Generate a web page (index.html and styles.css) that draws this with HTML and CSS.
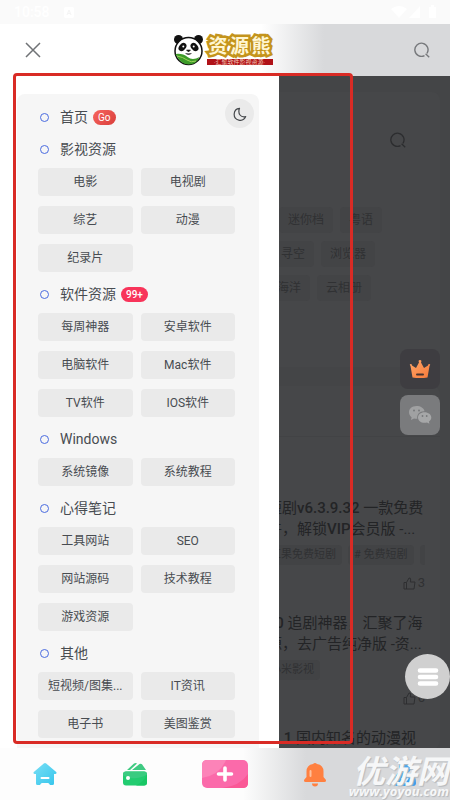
FILE: index.html
```html
<!DOCTYPE html>
<html lang="zh-CN">
<head>
<meta charset="utf-8">
<meta name="viewport" content="width=device-width, initial-scale=1">
<title>资源熊</title>
<link rel="stylesheet" href="styles.css">
</head>
<body>
<div class="status">
  <span class="status-left">10:58
    <svg width="10" height="11" viewBox="0 0 10 11"><rect width="10" height="11" rx="2" fill="#fff"/><path d="M3 8l2-5 2 5M4 6.5h2" stroke="#f4f4f4" fill="none"/></svg>
  </span>
  <svg width="46" height="14" viewBox="0 0 46 14" fill="#fff"><path d="M0 4Q8-2 16 4L8 13zM29 1v12H18zM38 2h2V0h3v2h2v11h-7z"/></svg>
</div>

<header class="header">
  <button class="icon-btn" aria-label="关闭"><svg width="16" height="16" viewBox="0 0 16 16" fill="none" stroke="#707376" stroke-width="1.5"><path d="M1 1l14 14M15 1L1 15"/></svg></button>
  <a class="logo" href="#">
    <svg width="31" height="32" viewBox="0 0 31 32">
      <circle cx="5.500" cy="5.500" r="4.500" fill="#111"/><circle cx="25.500" cy="5.500" r="4.500" fill="#111"/>
      <circle cx="15.500" cy="17" r="13.500" fill="#fff" stroke="#111" stroke-width="1.500"/>
      <path d="M2.500 20q7-1 12 3t12 0q-3 7.500-11 7.500T2.500 20z" fill="#3c9b28"/>
      <path d="M4 22q6 1 10 4t9 1" stroke="#9bd35a" fill="none"/>
      <ellipse cx="9.500" cy="13" rx="3.300" ry="4.600" transform="rotate(40 9.500 13)" fill="#111"/>
      <ellipse cx="21.500" cy="13" rx="3.300" ry="4.600" transform="rotate(-40 21.500 13)" fill="#111"/>
      <circle cx="10.300" cy="12.500" r="1" fill="#fff"/><circle cx="20.700" cy="12.500" r="1" fill="#fff"/>
      <path d="M13.500 16h4l-2 2zM12.500 19.500q3 2 6 0" fill="#111" stroke="#111" stroke-width=".6"/>
    </svg>
    <span class="logo-text"><span class="logo-name"><b>资</b><b>源</b><b>熊</b></span><span class="logo-sub">·汇聚软件影视资源·</span></span>
  </a>
  <button class="icon-btn" aria-label="搜索"><svg width="16" height="16" viewBox="0 0 16 16" fill="none" stroke="#77797c" stroke-width="1.400"><path d="M10.500 13.600A6.600 6.600 0 1 1 13 11.300M11.600 11.800l3.600 3.400"/></svg></button>
</header>

<main class="main">
  <div class="page">
    <section class="card card-search">
      <button class="page-search" aria-label="搜索内容"><svg width="16" height="16" viewBox="0 0 16 16" fill="none" stroke="#2c2d2f" stroke-width="1.300"><path d="M10.500 13.600A6.600 6.600 0 1 1 13 11.300M11.600 11.800l3.600 3.400"/></svg></button>
      <div class="chips">
        <div class="chip-row chip-row-a"><a href="#">迷你档</a><a href="#">粤语</a></div>
        <div class="chip-row chip-row-b"><a href="#">寻空</a><a href="#">浏览器</a></div>
        <div class="chip-row"><a href="#">海洋</a><a href="#">云相册</a></div>
      </div>
    </section>
    <section class="card card-posts">
      <div class="tabs"></div>
      <article class="post">
        <h2>短剧<b>v6.3.9.32</b> 一款免费<br>件，解锁<b>VIP</b>会员版 -...</h2>
        <div class="tags"><a href="#">红果免费短剧</a><a href="#"># 免费短剧</a><a href="#"># 短剧</a></div>
        <div class="likes"><svg width="13" height="13" viewBox="0 0 13 13" fill="none" stroke="#2e2f31"><path d="M1 5.500h2.500v6.500H1zM3.500 5.500L6 1q2-.3 1.700 2L7.300 5H12l-1 7H3.500"/></svg>3</div>
      </article>
      <article class="post">
        <h2><span class="indent"><b>.0</b> 追剧神器，汇聚了海</span><br>源，去广告纯净版 -资...</h2>
        <div class="tags"><a href="#">小米影视</a></div>
        <div class="likes"><svg width="13" height="13" viewBox="0 0 13 13" fill="none" stroke="#2e2f31"><path d="M1 5.500h2.500v6.500H1zM3.500 5.500L6 1q2-.3 1.700 2L7.300 5H12l-1 7H3.500"/></svg>6</div>
      </article>
      <article class="post">
        <h2><span class="indent"><b>5.1</b> 国内知名的动漫视</span></h2>
      </article>
    </section>
  </div>

  <aside class="drawer">
    <div class="panel">
      <button class="night" aria-label="夜间模式"><svg width="14" height="14" viewBox="0 0 14 14" fill="none" stroke="#45484c" stroke-width="1.200" stroke-linejoin="round"><path d="M6.500 1.300A6 6 0 1 0 12.700 9.600Q9 10.500 7 8T6.500 1.300z"/></svg></button>
      <h3><a href="#">首页</a><span class="badge badge-go">Go</span></h3>
      <h3><a href="#">影视资源</a></h3>
      <nav class="links"><a href="#">电影</a><a href="#">电视剧</a><a href="#">综艺</a><a href="#">动漫</a><a href="#">纪录片</a></nav>
      <h3><a href="#">软件资源</a><span class="badge badge-hot">99+</span></h3>
      <nav class="links"><a href="#">每周神器</a><a href="#">安卓软件</a><a href="#">电脑软件</a><a href="#">Mac软件</a><a href="#">TV软件</a><a href="#">IOS软件</a></nav>
      <h3><a href="#">Windows</a></h3>
      <nav class="links"><a href="#">系统镜像</a><a href="#">系统教程</a></nav>
      <h3><a href="#">心得笔记</a></h3>
      <nav class="links"><a href="#">工具网站</a><a href="#">SEO</a><a href="#">网站源码</a><a href="#">技术教程</a><a href="#">游戏资源</a></nav>
      <h3><a href="#">其他</a></h3>
      <nav class="links"><a href="#">短视频/图集...</a><a href="#">IT资讯</a><a href="#">电子书</a><a href="#">美图鉴赏</a></nav>
    </div>
  </aside>

  <div class="floats">
    <button class="float float-vip" aria-label="会员"><svg width="22" height="20" viewBox="0 0 22 20"><defs><linearGradient id="cr" x1="0" y1="0" x2="1" y2="1"><stop offset="0" stop-color="#ffa668"/><stop offset="1" stop-color="#f77a3a"/></linearGradient></defs><path d="M3.500 18.500L1.500 7q-1.500-1.500 0-2t1.500 1.500l4 2.500 3-5.500q-1.200-2.500 1-2.500t1 2.500l3 5.500 4-2.500Q19 4.500 20.500 5t0 2l-2 11.500q-7.500 1-15 0z" fill="url(#cr)"/><rect x="7" y="14.500" width="8" height="2" rx="1" fill="#4a3430"/></svg></button>
    <button class="float float-wx" aria-label="微信"><svg width="24" height="20" viewBox="0 0 24 20"><path d="M8.500 1C4 1 1 3.800 1 7.300c0 2 1 3.700 2.600 4.900L3 15l3-1.500q1.500.4 3.300.3C8.500 9 12 6 16.500 6.300 16 3 12.500 1 8.500 1z" fill="#a0a1a2"/><path d="M16.500 7.200c-3.800 0-6.500 2.400-6.500 5.300s2.700 5.300 6.500 5.300q1.400 0 2.500-.4l2.400 1.400-.5-2.200c1.500-1 2.400-2.500 2.400-4.100 0-2.900-3-5.300-6.800-5.300z" fill="#a6a7a8"/><g fill="#77787a"><circle cx="6" cy="5.500" r="1"/><circle cx="11" cy="5.500" r="1"/><circle cx="14.500" cy="11" r=".9"/><circle cx="18.700" cy="11" r=".9"/></g></svg></button>
  </div>
  <button class="menu" aria-label="菜单"><svg width="22" height="20" viewBox="0 0 22 20" stroke="#fff" stroke-width="4.600" stroke-linecap="round"><path d="M3 3.500h16M3 10h16M3 16.500h16"/></svg></button>
  <div class="frame"></div>
</main>

<nav class="tabbar">
  <a href="#" aria-label="首页"><svg width="24" height="24" viewBox="0 0 24 24"><defs><linearGradient id="ho" x1="0" y1="0" x2="1" y2="1"><stop offset="0" stop-color="#79dff5"/><stop offset="1" stop-color="#35c5ec"/></linearGradient></defs><path d="M10.800 1.500q1.200-1 2.400 0l10 8.500q1 1.500-.7 2H21v9.500q0 1.500-1.500 1.500H17q-1-2-2-2H9q-1 0-2 2H4.500Q3 23 3 21.500V12H1.500q-1.700-.5-.7-2z" fill="url(#ho)"/><rect x="7.500" y="15" width="9" height="2" rx="1" fill="#fff"/></svg></a>
  <a href="#" aria-label="钱包"><svg width="26" height="24" viewBox="0 0 26 24"><path d="M5 8l7-6.500q2-1 3 0L8 8zM10 8l7.500-6q1.500-.7 2.500.3l4 5.700z" fill="#3fca82"/><rect x="1" y="9.500" width="24" height="14" rx="3" fill="#22cc70"/><path d="M14 23.500Q22 20 25 12v8.500q0 3-3 3z" fill="#19c765"/><path d="M4 9.500h18q3 0 3 3-12 7-24 1v-1q0-3 3-3z" fill="#3acb80"/><circle cx="6" cy="16" r="2" fill="#fff"/></svg></a>
  <a href="#" aria-label="发布"><svg width="46" height="28" viewBox="0 0 46 28"><rect width="46" height="28" rx="5" fill="#fb6aaa"/><path d="M5 0h19Q18 15 0 18V5q0-5 5-5z" fill="#fc83b8"/><path d="M46 14v9q0 5-5 5H20q18-2 26-14z" fill="#fa5896"/><path d="M23 8v12M16.500 14h13" stroke="#fff" stroke-width="3.600" stroke-linecap="round"/></svg></a>
  <a href="#" aria-label="消息"><svg width="24" height="25" viewBox="0 0 24 25"><path d="M10 2q2-2 4 0 6.500 1 6.500 7.500V15l2.500 3q.5 2-1.500 2h-19Q.5 20 1 18l2.500-3V9.500Q3.500 3 10 2z" fill="#ff8040"/><path d="M7.500 9v5" stroke="#ffc09b" stroke-width="2" stroke-linecap="round"/><path d="M9 21.500h6q0 3-3 3t-3-3z" fill="#ff8040"/></svg></a>
  <a href="#" aria-label="我的"><svg width="24" height="26" viewBox="0 0 24 26"><circle cx="12" cy="6.500" r="6" fill="#4aa6ee"/><path d="M5 12h14q4 4 4 10 0 3-3 3H4q-3 0-3-3 0-6 4-10z" fill="#3a9bed"/><path d="M9 17l3 4 3-4" stroke="#d8ebfa" stroke-width="2" fill="none"/></svg></a>
  <div class="watermark"><span class="wm-name">优游网</span><span class="wm-url">www.yoyou.com</span></div>
</nav>
</body>
</html>
```
FILE: styles.css
```css
* { box-sizing: border-box; }

body {
  margin: 0;
  height: 100vh;
  display: flex;
  flex-direction: column;
  overflow: hidden;
  background: #fff;
  font-family: Roboto, "Noto Sans CJK SC", sans-serif;
  color: #484c51;
}

a { color: inherit; text-decoration: none; }
h2, h3 { margin: 0; font-weight: 400; }
svg { display: block; }
button { border: 0; padding: 0; background: none; display: grid; place-items: center; }

/* top bars */
.status {
  display: flex;
  align-items: center;
  justify-content: space-between;
  height: 24px;
  flex: none;
  padding: 0 13px 0 14px;
  background: #fafafa;
  color: #fff;
  font-size: 14px;
  font-weight: 500;
}
.status-left { display: flex; align-items: center; gap: 14px; }

.header {
  display: flex;
  align-items: center;
  justify-content: space-between;
  height: 52px;
  flex: none;
  padding: 0 20px 0 25px;
  background: linear-gradient(90deg, #fff 58%, #d8d9db 72%);
}
.logo { display: flex; align-items: center; gap: 3px; margin-right: 10px; }
.logo-text { display: flex; flex-direction: column; gap: 1px; }
.logo-name {
  display: flex;
  justify-content: space-between;
  padding: 0 2px;
  font-size: 19px;
  line-height: 23px;
  color: #fff6d2;
  -webkit-text-stroke: 5px #c4941c;
  paint-order: stroke fill;
}
.logo-sub {
  width: 66px;
  background: #b01218;
  color: #f3c9b8;
  font-size: 6px;
  line-height: 6px;
  text-align: center;
  white-space: nowrap;
}

/* dimmed page and drawer share one cell */
.main {
  position: relative;
  flex: 1;
  min-height: 0;
  display: grid;
  grid-template: minmax(0, 1fr) / 100%;
  background: #444547;
}
.page, .drawer { grid-area: 1 / 1; min-height: 0; overflow: hidden; }
.page { padding: 16px 10px 0; color: #303133; }

.card { background: #464749; border-radius: 8px; }
.card-search { padding: 40px 0 66px; }
.page-search { margin: 0 34px 59px auto; }
.chips { display: grid; gap: 8px; width: 172px; margin-left: auto; }
.chip-row { display: flex; gap: 7px; }
.chip-row-a { padding-left: 11px; }
.chip-row-b { padding-left: 4px; }
.chip-row a {
  padding: 0 9px;
  border-radius: 4px;
  background: #434446;
  font-size: 12px;
  line-height: 26px;
}

.card-posts { margin-top: 19px; }
.tabs { height: 51px; margin-bottom: 61px; border-bottom: 1px solid #424345; }
.post { width: 161px; margin: 0 15px 22px auto; }
.post h2 {
  padding-left: 3px;
  font-size: 15px;
  line-height: 21px;
  white-space: nowrap;
  color: #232426;
}
.post b { font-weight: 500; }
.post .indent { padding-left: 4px; }
.tags { display: flex; gap: 6px; margin: 5px 0 10px; overflow: hidden; }
.tags a {
  flex: none;
  padding: 0 6px;
  border-radius: 4px;
  background: #424345;
  font-size: 11px;
  line-height: 20px;
}
.likes {
  display: flex;
  align-items: center;
  justify-content: flex-end;
  gap: 2px;
  font-size: 13px;
  line-height: 16px;
}

.drawer { width: 62%; padding: 18px 20px 0 17px; background: #fff; }
.panel {
  position: relative;
  height: 100%;
  padding: 7px 24px 0 21px;
  border-radius: 8px 8px 0 0;
  background: #f6f6f6;
}
.night {
  position: absolute;
  top: 5px;
  right: 5px;
  width: 29px;
  height: 29px;
  border-radius: 50%;
  background: #eaeaea;
}
.panel h3 {
  display: flex;
  align-items: center;
  padding-left: 3px;
  font-size: 14px;
  line-height: 32px;
}
.panel h3::before {
  content: "";
  width: 7px;
  height: 7px;
  margin-right: 12px;
  border: 1px solid #4a6be0;
  border-radius: 50%;
}
.panel h3 { padding-left: 2px; }
.panel h3::before { margin-right: 11px; }
.badge {
  margin-left: 5px;
  border-radius: 8px;
  color: #fff;
  line-height: 15px;
}
.badge-go { padding: 0 5px; font-size: 10px; background: linear-gradient(135deg, #f7655f, #d93f3b); }
.badge-hot { padding: 0 5px; font-size: 10px; font-weight: 500; background: #f8345a; }

.links {
  display: grid;
  grid-template-columns: repeat(2, minmax(0, 1fr));
  gap: 10px 8px;
  margin: 3px 0 6px;
}
.links a {
  padding: 0 5px;
  border-radius: 4px;
  background: #eaeaea;
  font-size: 12px;
  line-height: 28px;
  text-align: center;
  white-space: nowrap;
  overflow: hidden;
  text-overflow: ellipsis;
}

/* overlays */
.floats { position: absolute; right: 10px; bottom: 313px; display: grid; gap: 6px; }
.float { width: 40px; height: 40px; border-radius: 8px; }
.float-vip { background: #3e3d41; }
.float-wx { background: #7a7b7d; }
.menu {
  position: absolute;
  right: 0;
  bottom: 49px;
  width: 45px;
  height: 45px;
  border-radius: 50%;
  background: #d0d0d0;
}
.frame {
  position: absolute;
  inset: -3px 97px 4px 13px;
  border: 3px solid #d92b25;
  border-radius: 4px;
  pointer-events: none;
}

.tabbar {
  position: relative;
  display: grid;
  grid-template-columns: repeat(5, 1fr);
  place-items: center;
  height: 52px;
  flex: none;
  background: linear-gradient(90deg, #fdfdfd 54%, #d8d9db 68%);
}
.watermark {
  position: absolute;
  right: 1px;
  bottom: 2px;
  display: flex;
  flex-direction: column;
  align-items: flex-end;
  color: #f6f7f8;
  font-style: italic;
  font-weight: 700;
  text-shadow: 1px 1px 1px #b4b8bc;
}
.wm-name { font-size: 32px; line-height: 26px; }
.wm-url { font-size: 13px; line-height: 13px; font-family: "Open Sans", sans-serif; }
```
